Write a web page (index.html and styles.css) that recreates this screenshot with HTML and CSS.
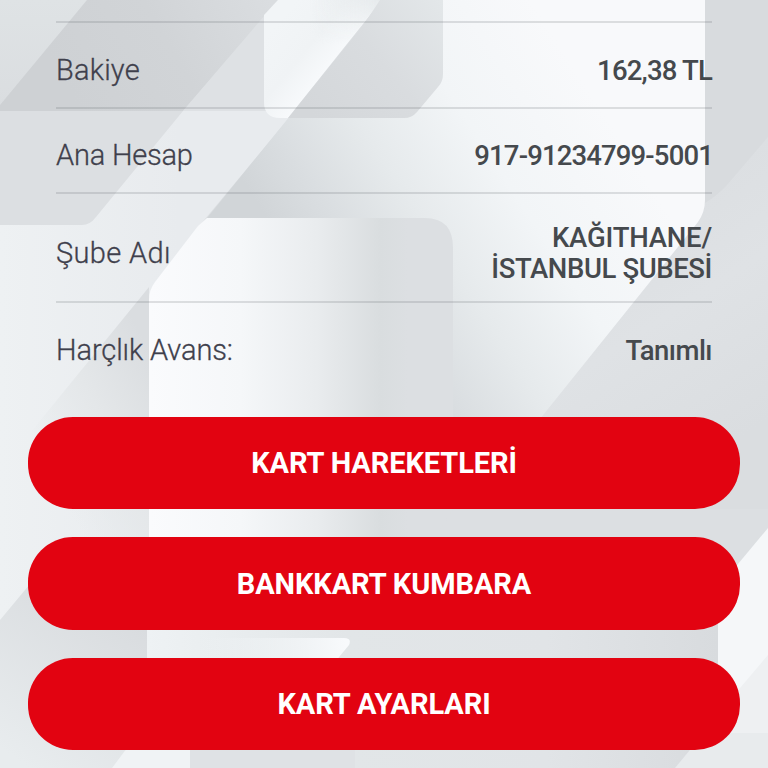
FILE: index.html
```
<!DOCTYPE html>
<html lang="tr">

<head>
    <meta charset="UTF-8">
    <meta name="viewport" content="width=device-width, initial-scale=1.0">
    <title>Kart Detay</title>

    <link rel="stylesheet" href="styles.css">
</head>

<body>

    <svg class="backdrop" viewBox="0 0 768 768" preserveAspectRatio="none" aria-hidden="true">
        <defs>
            <linearGradient id="corner" x1="0" y1="0" x2="0" y2="1">
                <stop offset="0" stop-color="#dfe3e5" />
                <stop offset="1" stop-color="#dadde0" />
            </linearGradient>
            <linearGradient id="dark" gradientUnits="userSpaceOnUse" x1="80" y1="110" x2="270" y2="0">
                <stop offset="0" stop-color="#ced1d4" />
                <stop offset=".5" stop-color="#d1d4d7" />
                <stop offset="1" stop-color="#dadde0" />
            </linearGradient>
            <linearGradient id="left" gradientUnits="userSpaceOnUse" x1="0" y1="0" x2="180" y2="0">
                <stop offset="0" stop-color="#eef1f3" />
                <stop offset="1" stop-color="#e8ebee" />
            </linearGradient>
            <linearGradient id="leftShade" gradientUnits="userSpaceOnUse" x1="20" y1="420" x2="150" y2="350">
                <stop offset="0" stop-color="#e4e8ea" stop-opacity="0" />
                <stop offset=".5" stop-color="#e4e7e9" />
                <stop offset="1" stop-color="#dadde0" />
            </linearGradient>
            <linearGradient id="ribbon" gradientUnits="userSpaceOnUse" x1="280" y1="20" x2="335" y2="65">
                <stop offset="0" stop-color="#f2f5f7" />
                <stop offset=".55" stop-color="#f0f3f5" />
                <stop offset="1" stop-color="#f8fafc" />
            </linearGradient>
            <linearGradient id="ribbonTop" gradientUnits="userSpaceOnUse" x1="310" y1="0" x2="380" y2="0">
                <stop offset="0" stop-color="#e6eaec" stop-opacity="0" />
                <stop offset="1" stop-color="#e6eaec" />
            </linearGradient>
            <linearGradient id="fadeDown" x1="0" y1="0" x2="0" y2="1">
                <stop offset="0" stop-color="#fff" />
                <stop offset="1" stop-color="#000" />
            </linearGradient>
            <mask id="topMask">
                <rect x="260" y="0" width="130" height="45" fill="url(#fadeDown)" />
            </mask>
            <linearGradient id="tile" gradientUnits="userSpaceOnUse" x1="310" y1="110" x2="440" y2="0">
                <stop offset="0" stop-color="#d4d7da" />
                <stop offset=".5" stop-color="#d9dcdf" />
                <stop offset="1" stop-color="#e3e7e9" />
            </linearGradient>
            <linearGradient id="panel" gradientUnits="userSpaceOnUse" x1="265" y1="215" x2="550" y2="30">
                <stop offset="0" stop-color="#d1d5d8" />
                <stop offset=".15" stop-color="#d9dde0" />
                <stop offset=".38" stop-color="#e6eaec" />
                <stop offset=".65" stop-color="#f2f5f7" />
                <stop offset="1" stop-color="#f8f9fb" />
            </linearGradient>
            <linearGradient id="card" gradientUnits="userSpaceOnUse" x1="150" y1="0" x2="453" y2="0">
                <stop offset="0" stop-color="#fafbfd" />
                <stop offset=".3" stop-color="#f5f7f9" />
                <stop offset=".55" stop-color="#e9ecee" />
                <stop offset=".76" stop-color="#d9dddf" />
                <stop offset=".85" stop-color="#dcdfe2" />
                <stop offset="1" stop-color="#dcdfe2" />
            </linearGradient>
            <linearGradient id="right" gradientUnits="userSpaceOnUse" x1="640" y1="220" x2="768" y2="420">
                <stop offset="0" stop-color="#dcdfe2" />
                <stop offset=".4" stop-color="#dfe2e5" />
                <stop offset="1" stop-color="#dadde0" />
            </linearGradient>
            <linearGradient id="lowLeft" gradientUnits="userSpaceOnUse" x1="130" y1="620" x2="30" y2="768">
                <stop offset="0" stop-color="#d9dcdf" />
                <stop offset="1" stop-color="#e8ecee" />
            </linearGradient>
            <linearGradient id="low" gradientUnits="userSpaceOnUse" x1="147" y1="0" x2="718" y2="0">
                <stop offset="0" stop-color="#eef2f4" />
                <stop offset=".35" stop-color="#e2e6e8" />
                <stop offset=".7" stop-color="#e1e4e7" />
                <stop offset="1" stop-color="#d8dbde" />
            </linearGradient>
            <linearGradient id="wedge" gradientUnits="userSpaceOnUse" x1="200" y1="660" x2="345" y2="640">
                <stop offset="0" stop-color="#eef2f4" stop-opacity="0" />
                <stop offset="1" stop-color="#f8fafc" />
            </linearGradient>
        </defs>

        <rect width="768" height="768" fill="#dcdfe2" />

        <!-- top left -->
        <path d="M0 0H87L0 106z" fill="url(#corner)" />
        <path d="M87 0H278L183 111H0V105z" fill="url(#dark)" />
        <path d="M278 0L183 111H300V0z" fill="#dee1e4" />
        <path d="M183 111H295L200 225L150 300V768H0V225H82Q90 225 96 217z" fill="url(#left)" />
        <path d="M149 287L70 384L0 470V600H150z" fill="url(#leftShade)" />

        <!-- white panel on the right and grey around it -->
        <path d="M705 0H768V210L690 240z" fill="#d8dbde" />
        <path d="M768 137L727 185Q718 195 705 203L520 430V540H768z" fill="url(#right)" />
        <path d="M290 116L207 218V270H430V500H475L568 384L698 222Q705 212 705 200V0H440z" fill="url(#panel)" />

        <!-- ribbon and tile -->
        <path d="M278 0H382L288 118H280Q264 118 264 102V15z" fill="url(#ribbon)" />
        <path d="M278 0H382L345 45H264V15z" fill="url(#ribbonTop)" mask="url(#topMask)" />
        <path d="M380 0H443V74Q443 82 438 87L417 112Q412 118 404 118H288L364 24Q372 12 380 0z" fill="url(#tile)" />

        <!-- big card -->
        <path d="M207 218H425Q453 218 453 248V505L440 540H149V300Q149 290 155 282L198 226z" fill="url(#card)" />
        <path d="M453 509H768V640H440V530z" fill="#dcdfe2" />

        <!-- bottom -->
        <path d="M0 620L60 548H147V768H0z" fill="url(#lowLeft)" />
        <rect x="147" y="560" width="571" height="208" fill="url(#low)" />
        <path d="M200 638H344Q352 638 349 645L330 668H200z" fill="url(#wedge)" />
        <path d="M124 752L112 768H190V740H134z" fill="#f0f3f5" />
        <path d="M190 740H355V768H190z" fill="#dfe2e5" />
        <path d="M768 528L718 588V768H768z" fill="#f5f7f9" />
        <path d="M768 655L718 714V768H768z" fill="#eef0f2" />
        <path d="M704 733H768V768H675z" fill="#e8ebed" />
    </svg>

    <main class="card-detail">
        <dl class="info">
            <div class="row">
                <dt class="bakiye">Bakiye</dt>
                <dd class="amount">162,38 TL</dd>
            </div>
            <div class="row">
                <dt class="hesap">Ana Hesap</dt>
                <dd class="account">917-91234799-5001</dd>
            </div>
            <div class="row row-tall">
                <dt class="sube">Şube Adı</dt>
                <dd class="branch"><span class="branch-city">KAĞITHANE/</span><br>İSTANBUL ŞUBESİ</dd>
            </div>
            <div class="row row-last">
                <dt class="avans">Harçlık Avans:</dt>
                <dd class="status">Tanımlı</dd>
            </div>
        </dl>

        <div class="actions">
            <button type="button">KART HAREKETLERİ</button>
            <button type="button">BANKKART KUMBARA</button>
            <button type="button">KART AYARLARI</button>
        </div>
    </main>

</body>

</html>
```
FILE: styles.css
```
*,
*::before,
*::after {
    box-sizing: border-box;
}

body {
    margin: 0;
    height: 768px;
    overflow: hidden;
    position: relative;
    font-family: Roboto, "Liberation Sans", sans-serif;
}

.backdrop {
    position: absolute;
    inset: 0;
    width: 100%;
    height: 100%;
}

.card-detail {
    position: relative;
    padding: 21px 28px 0;
}

.info {
    margin: 0;
    padding: 0 28px;
}

.row {
    display: flex;
    align-items: center;
    justify-content: space-between;
    height: 85.5px;
    padding-top: 10px;
    border-top: 2px solid rgba(90, 95, 102, 0.18);
}

.row-tall {
    height: 109px;
}

.row-last {
    height: 115.5px;
    padding: 0 0 20px;
}

dt {
    font-size: 29px;
    font-weight: 300;
    color: #3f404c;
    -webkit-text-stroke: 0.3px #3f404c;
}

dd {
    margin: 0;
    font-size: 27.5px;
    font-weight: 500;
    line-height: 31px;
    text-align: right;
    color: #45494d;
}

.bakiye {
    letter-spacing: 0.2px;
}

.hesap {
    letter-spacing: -0.2px;
}

.sube {
    letter-spacing: 0.35px;
}

.avans {
    letter-spacing: -0.1px;
}

.amount {
    padding-top: 2px;
    letter-spacing: -0.8px;
}

.account {
    padding-top: 1px;
    margin-right: -1px;
    letter-spacing: -0.85px;
}

.branch {
    letter-spacing: -0.4px;
}

.branch-city {
    letter-spacing: -0.2px;
}

.status {
    padding-top: 2px;
    letter-spacing: -0.55px;
}

.actions {
    display: grid;
    gap: 28px;
}

button {
    height: 92.5px;
    border: 0;
    border-radius: 45px;
    padding: 1px 0 0;
    background-color: #e20311;
    color: #fff;
    font-family: inherit;
    font-size: 29px;
    font-weight: 700;
    letter-spacing: -0.1px;
}
```
